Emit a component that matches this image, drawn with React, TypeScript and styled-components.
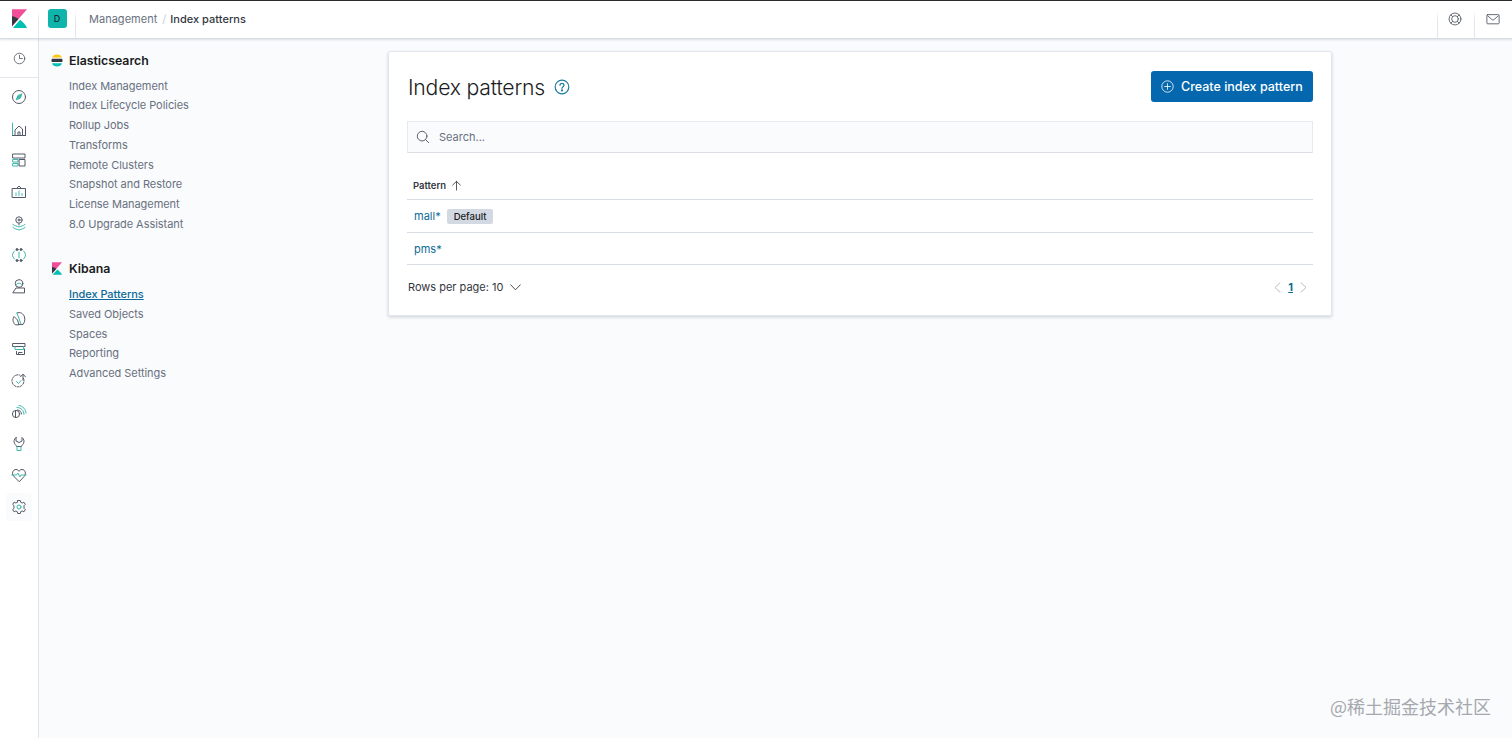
import React from "react";
import styled, { createGlobalStyle } from "styled-components";

const Global = createGlobalStyle`
  html, body { margin: 0; padding: 0; height: 100%; }
  body { font-family: Inter, "Liberation Sans", sans-serif; background: #f9fbfd; color: #343741; overflow: hidden; }
  #root { height: 738px; }
`;

const LINK = "#0e6a96";
const SEP = "linear-gradient(to bottom, transparent 28%, #e3e6ec 50%) 1";

const Page = styled.div`
  position: relative;
  width: 1512px;
  height: 738px;
  display: flex;
  flex-direction: column;
  overflow: hidden;
`;
const Header = styled.header`
  height: 39px;
  flex: none;
  box-sizing: border-box;
  border-top: 1px solid #2b2b2b;
  background: #fff;
  border-bottom: 1px solid #d8dde5;
  box-shadow: 0 1px 2px rgba(90, 100, 120, 0.18);
  display: flex;
  align-items: stretch;
  position: relative;
  z-index: 2;
`;
const LogoCell = styled.div`
  width: 39px;
  flex: none;
  display: flex;
  align-items: center;
  justify-content: center;
  padding-bottom: 3px;
  box-sizing: border-box;
  border-right: 1px solid;
  border-image: ${SEP};
`;
const SpaceCell = styled.div`
  width: 37px;
  flex: none;
  display: flex;
  align-items: center;
  justify-content: center;
  padding-bottom: 3px;
  box-sizing: border-box;
  border-right: 1px solid;
  border-image: ${SEP};
`;
const SpaceBadge = styled.div`
  width: 19px;
  height: 19px;
  border-radius: 3px;
  background: #0fb5ab;
  color: #1a2b30;
  font-size: 9px;
  font-weight: 500;
  display: flex;
  align-items: center;
  justify-content: center;
`;
const Crumbs = styled.nav`
  flex: 1;
  display: flex;
  align-items: center;
  padding: 0 0 1px 13px;
  font-size: 11px;
  letter-spacing: 0.02px;
`;
const CrumbLink = styled.span`
  color: #69707d;
`;
const CrumbSep = styled.span`
  color: #c6ccd6;
  margin: 0 4px 0 5px;
`;
const CrumbNow = styled.span`
  color: #343741;
  font-weight: 500;
`;
const HeadIcon = styled.div<{ $w: number }>`
  width: ${(p) => p.$w}px;
  flex: none;
  display: flex;
  align-items: center;
  justify-content: center;
  padding: 0 2px 1px 0;
  box-sizing: border-box;
  border-left: 1px solid;
  border-image: ${SEP};
`;
const Body = styled.div`
  flex: 1;
  display: flex;
  min-height: 0;
`;
const Rail = styled.aside`
  width: 39px;
  flex: none;
  box-sizing: border-box;
  background: #fff;
  border-right: 1px solid #dfe3ea;
  display: flex;
  flex-direction: column;
  align-items: stretch;
`;
const RailTop = styled.div`
  height: 38px;
  flex: none;
  display: flex;
  align-items: center;
  justify-content: center;
  border-bottom: 1px solid #e4e7ed;
`;
const RailList = styled.div`
  display: flex;
  flex-direction: column;
  padding-top: 3.5px;
`;
const RailItem = styled.div`
  height: 31.5px;
  display: flex;
  align-items: center;
  justify-content: center;
`;
const RailBubble = styled.span<{ $active?: boolean }>`
  width: 26px;
  height: 28px;
  border-radius: 4px;
  display: flex;
  align-items: center;
  justify-content: center;
  background: ${(p) => (p.$active ? "#fafbfc" : "transparent")};
`;
const SideNav = styled.nav`
  width: 349px;
  flex: none;
  box-sizing: border-box;
  padding: 11px 0 0 12px;
  display: flex;
  flex-direction: column;
`;
const Group = styled.div`
  margin-bottom: 24px;
`;
const GroupHead = styled.div`
  display: flex;
  align-items: center;
  gap: 6px;
  height: 20px;
  font-size: 12.3px;
  font-weight: 600;
  color: #1a1c21;
  margin-bottom: 6.5px;
`;
const GroupIcon = styled.span`
  width: 12px;
  height: 14px;
  display: flex;
  align-items: center;
  justify-content: center;
`;
const NavLink = styled.div<{ $active?: boolean }>`
  height: 19.75px;
  line-height: 19.75px;
  padding-left: 18px;
  font-size: 11px;
  letter-spacing: -0.05px;
  color: ${(p) => (p.$active ? LINK : "#69707d")};
  font-weight: ${(p) => (p.$active ? 500 : 400)};
  text-decoration: ${(p) => (p.$active ? "underline" : "none")};
`;
const Main = styled.main`
  padding-top: 12px;
  flex: none;
`;
const Card = styled.section`
  width: 944px;
  height: 265px;
  box-sizing: border-box;
  background: #fff;
  border: 1px solid #e3e6ec;
  border-radius: 2px;
  box-shadow: 0 1px 3px rgba(80, 95, 120, 0.2), 0 2px 4px rgba(80, 95, 120, 0.06);
  padding: 19px 18px 0 18px;
`;
const TitleRow = styled.div`
  display: flex;
  align-items: center;
  justify-content: space-between;
  height: 31px;
`;
const TitleWrap = styled.div`
  display: flex;
  align-items: center;
  gap: 9px;
  padding-left: 1px;
`;
const Title = styled.h1`
  margin: 0;
  font-size: 21.2px;
  font-weight: 300;
  letter-spacing: -0.2px;
  color: #1a1c21;
`;
const Primary = styled.button`
  width: 162px;
  height: 31px;
  border: none;
  border-radius: 3px;
  background: #0568ae;
  color: #fff;
  font-family: inherit;
  font-size: 12.5px;
  font-weight: 500;
  display: flex;
  align-items: center;
  gap: 7px;
  padding: 0 0 0 10px;
`;
const Search = styled.div`
  margin-top: 19px;
  height: 32px;
  box-sizing: border-box;
  background: #fafbfd;
  border: 1px solid #e6e9ef;
  border-bottom-color: #dcdfe6;
  display: flex;
  align-items: center;
  gap: 9px;
  padding: 0 0 0 8px;
  font-size: 11px;
  color: #69707d;
`;
const Table = styled.div`
  margin-top: 17px;
`;
const HeadRow = styled.div`
  height: 30px;
  box-sizing: border-box;
  padding: 2px 0 0 6px;
  display: flex;
  align-items: center;
  gap: 5px;
  font-size: 9.5px;
  font-weight: 600;
  color: #343741;
  border-bottom: 1px solid #d8dde5;
`;
const Row = styled.div`
  height: 32.5px;
  box-sizing: border-box;
  display: flex;
  align-items: center;
  gap: 6px;
  padding: 1px 0 0 7px;
  font-size: 11px;
  color: ${LINK};
  border-bottom: 1px solid #d8dde5;
`;
const Badge = styled.span`
  background: #d3d9e3;
  color: #1a1c21;
  font-size: 9.5px;
  font-weight: 500;
  height: 15px;
  line-height: 15px;
  border-radius: 2px;
  padding: 0 7px;
`;
const Pager = styled.div`
  margin-top: 13px;
  display: flex;
  align-items: center;
  justify-content: space-between;
  height: 18px;
  font-size: 11px;
  color: #343741;
  padding-left: 1px;
`;
const Rows = styled.div`
  display: flex;
  align-items: center;
  gap: 7px;
`;
const Pages = styled.div`
  display: flex;
  align-items: center;
  gap: 7px;
  padding-right: 6px;
`;
const PageNum = styled.span`
  color: ${LINK};
  font-weight: 700;
  font-size: 11px;
  text-decoration: underline;
`;
const Watermark = styled.div`
  position: absolute;
  right: 21px;
  bottom: 21px;
  font-family: "Noto Sans CJK SC", sans-serif;
  font-size: 18px;
  line-height: 22px;
  color: #a6a8ad;
`;

const C = "#535966";
const T = "#3fb8ad";

const Svg: React.FC<{ children: React.ReactNode; size?: number }> = ({ children, size = 16 }) => (
  <svg width={size} height={size} viewBox="0 0 16 16" fill="none" stroke={C} strokeWidth={1} strokeLinecap="round" strokeLinejoin="round">
    {children}
  </svg>
);

const KLogo: React.FC<{ w: number; h: number }> = ({ w, h }) => (
  <svg width={w} height={h} viewBox="0 0 16 20">
    <path d="M0 0H16L0 18.5Z" fill="#f04e98" />
    <path d="M0 7.5L0 18L7 10.5C5 8.8 2.5 7.7 0 7.5Z" fill="#343741" />
    <path d="M1 20L8.6 11.4C11.8 13.7 14.4 16.6 16 20Z" fill="#00bfb3" />
  </svg>
);

const railIcons: React.ReactNode[] = [
  <Svg key="discover"><circle cx="8" cy="8" r="6.5" /><path d="M10.8 5.2L9.2 9.2L5.2 10.8L6.8 6.8Z" stroke={T} fill={T} /></Svg>,
  <Svg key="visualize"><path d="M1.5 2V14.5" stroke={T} /><path d="M4 14.5V9L8 5L11.5 8V14.5M14.5 14.5V5.5M1.5 14.5H14.5" /><path d="M7 14.5V11H9V14.5" /></Svg>,
  <Svg key="dashboard"><rect x="2" y="2" width="12" height="4" /><rect x="2" y="7.5" width="5" height="2.5" stroke={T} /><rect x="2" y="11.5" width="5" height="2.5" stroke={T} /><rect x="8.5" y="7.5" width="5.5" height="6.5" /></Svg>,
  <Svg key="canvas"><rect x="1.5" y="4.5" width="13" height="9" /><path d="M5.5 4.5L8 2L10.5 4.5" /><path d="M5 11.5V9M8 11.5V7M11 11.5V9.5" stroke={T} /></Svg>,
  <Svg key="maps"><circle cx="8" cy="5" r="3.2" /><circle cx="8" cy="5" r="1" /><path d="M8 8.5V10" /><path d="M2 9.5C4 11 5.5 11 8 12C10.5 11 12 11 14 9.5M2 12.5C4 14 5.5 14 8 15C10.5 14 12 14 14 12.5" stroke={T} /></Svg>,
  <Svg key="ml"><circle cx="6" cy="2.5" r="1" fill={C} /><circle cx="10" cy="2.5" r="1" fill={C} /><circle cx="6" cy="13.5" r="1" fill={C} /><circle cx="10" cy="13.5" r="1" fill={C} /><path d="M3.5 4C2 5.5 1.5 7 1.5 8S2 10.5 3.5 12M12.5 4C14 5.5 14.5 7 14.5 8S14 10.5 12.5 12" stroke={T} /><path d="M8 5V11" stroke={T} /></Svg>,
  <Svg key="infra"><circle cx="8" cy="5.5" r="3.8" /><path d="M5 7C6 4.5 10 4.5 11 7" stroke={T} /><path d="M2 14.5L5 10H13.5V14.5Z" /></Svg>,
  <Svg key="logs"><path d="M4 14.5C1.5 12 1.5 8.5 3 6.5L6.5 10L8 14.5Z" /><path d="M6 3C9 1.5 12.5 3.5 13.5 7C14.3 10 13.5 12.5 12 14.5H8" /><path d="M6 3L10 14" stroke={T} /></Svg>,
  <Svg key="uptime"><path d="M2 2.5H14V5.5H2Z" /><path d="M4 5.5V8.5H12.5V5.5" stroke={T} /><path d="M13.5 8V13.5H5.5V10.5" /><path d="M7.5 13.5V11.5H11" /></Svg>,
  <Svg key="apm"><path d="M12.5 5.5A6 6 0 1 1 9 2.2" strokeDasharray="2.2 1.3" /><path d="M12 1.5V7M9.5 3.8L12 1.2L14.5 3.8" /><path d="M5.5 8.5L7.5 10.5L10 7.5" stroke={T} /></Svg>,
  <Svg key="siem"><circle cx="5" cy="10" r="3.6" /><path d="M4.5 7V13.5" /><path d="M6 3.5C10 3.5 13 6.5 13 10.5M8 1.5C12 2 15 5.5 15 9" stroke={T} /><path d="M6.5 6C8.8 6 10.5 8 10.5 10" /></Svg>,
  <Svg key="dev"><path d="M5 1.5V5L8 6.5L11 5V1.5C13 3 13.5 5.5 12.5 7.5C12 8.5 10.5 9.5 10.5 10.5H5.5C5.5 9.5 4 8.5 3.5 7.5C2.5 5.5 3 3 5 1.5Z" /><path d="M6 10.5V14.5H10V10.5" stroke={T} /></Svg>,
  <Svg key="monitoring"><path d="M8 14.5L2.5 9C0.5 6.5 1.8 2.5 5 2.5C6.5 2.5 7.5 3.3 8 4.3C8.5 3.3 9.5 2.5 11 2.5C14.2 2.5 15.5 6.5 13.5 9Z" /><path d="M0.8 8H5.5L7 6L8.8 10L10 8H15.2" stroke={T} /></Svg>,
  <Svg key="gear"><path d="M6.7 1.5H9.3L9.7 3.3L11.2 4L12.9 3.2L14.3 5.4L13 6.7V9.3L14.3 10.6L12.9 12.8L11.2 12L9.7 12.7L9.3 14.5H6.7L6.3 12.7L4.8 12L3.1 12.8L1.7 10.6L3 9.3V6.7L1.7 5.4L3.1 3.2L4.8 4L6.3 3.3Z" /><circle cx="8" cy="8" r="2" stroke={T} /></Svg>,
];

const esLinks = ["Index Management", "Index Lifecycle Policies", "Rollup Jobs", "Transforms", "Remote Clusters", "Snapshot and Restore", "License Management", "8.0 Upgrade Assistant"];
const kbLinks = ["Index Patterns", "Saved Objects", "Spaces", "Reporting", "Advanced Settings"];

export default function App() {
  return (
    <Page>
      <Global />
      <Header>
        <LogoCell><KLogo w={15} h={19} /></LogoCell>
        <SpaceCell><SpaceBadge>D</SpaceBadge></SpaceCell>
        <Crumbs>
          <CrumbLink>Management</CrumbLink>
          <CrumbSep>/</CrumbSep>
          <CrumbNow>Index patterns</CrumbNow>
        </Crumbs>
        <HeadIcon $w={37}>
          <Svg size={14}>
            <circle cx="8" cy="8" r="6.8" />
            <circle cx="8" cy="8" r="3.8" />
            <path d="M3.2 3.2L5.3 5.3M12.8 3.2L10.7 5.3M3.2 12.8L5.3 10.7M12.8 12.8L10.7 10.7" />
          </Svg>
        </HeadIcon>
        <HeadIcon $w={38}>
          <Svg size={14}>
            <rect x="1" y="3" width="14" height="10.5" rx="1" />
            <path d="M2 4.5L8 9.5L14 4.5" />
          </Svg>
        </HeadIcon>
      </Header>
      <Body>
        <Rail>
          <RailTop>
            <Svg size={13}><circle cx="8" cy="8" r="6.5" /><path d="M8 4V8H11.5" /></Svg>
          </RailTop>
          <RailList>
            {railIcons.map((icon, i) => (
              <RailItem key={i}>
                <RailBubble $active={i === railIcons.length - 1}>{icon}</RailBubble>
              </RailItem>
            ))}
          </RailList>
        </Rail>
        <SideNav>
          <Group>
            <GroupHead>
              <GroupIcon>
                <svg width="12" height="13" viewBox="0 0 12 13">
                  <path d="M1 3.6C1.8 1.6 3.7 0.5 6 0.5S10.2 1.6 11 3.6Z" fill="#fec514" />
                  <rect x="0.5" y="4.8" width="11" height="3.3" rx="1.2" fill="#343741" />
                  <path d="M1 9.3C1.8 11.4 3.7 12.5 6 12.5S10.2 11.4 11 9.3Z" fill="#00bfb3" />
                </svg>
              </GroupIcon>
              Elasticsearch
            </GroupHead>
            {esLinks.map((l) => <NavLink key={l}>{l}</NavLink>)}
          </Group>
          <Group>
            <GroupHead>
              <GroupIcon><KLogo w={10} h={13} /></GroupIcon>
              Kibana
            </GroupHead>
            {kbLinks.map((l, i) => <NavLink key={l} $active={i === 0}>{l}</NavLink>)}
          </Group>
        </SideNav>
        <Main>
          <Card>
            <TitleRow>
              <TitleWrap>
                <Title>Index patterns</Title>
                <svg width="16" height="16" viewBox="0 0 16 16" fill="none" stroke="#1f7a9e" strokeWidth="1.2" strokeLinecap="round">
                  <circle cx="8" cy="8" r="6.8" />
                  <path d="M6 6.3C6 5 7 4.3 8 4.3S10 5 10 6.2C10 7.7 8 7.7 8 9.3" />
                  <circle cx="8" cy="11.4" r="0.5" fill="#1f7a9e" />
                </svg>
              </TitleWrap>
              <Primary>
                <svg width="13" height="13" viewBox="0 0 16 16" fill="none" stroke="#fff" strokeWidth="1">
                  <circle cx="8" cy="8" r="7" />
                  <path d="M8 4V12M4 8H12" />
                </svg>
                Create index pattern
              </Primary>
            </TitleRow>
            <Search>
              <svg width="14" height="14" viewBox="0 0 16 16" fill="none" stroke="#535966" strokeWidth="1.1" strokeLinecap="round">
                <circle cx="7" cy="7" r="5.5" />
                <path d="M11 11L14.5 14.5" />
              </svg>
              Search...
            </Search>
            <Table>
              <HeadRow>
                Pattern
                <svg width="11" height="11" viewBox="0 0 12 12" fill="none" stroke="#343741" strokeWidth="0.9" strokeLinecap="round" strokeLinejoin="round">
                  <path d="M6 1.5V11M1.8 5.5L6 1.5L10.2 5.5" />
                </svg>
              </HeadRow>
              <Row>mall*<Badge>Default</Badge></Row>
              <Row>pms*</Row>
            </Table>
            <Pager>
              <Rows>
                Rows per page: 10
                <svg width="11" height="7" viewBox="0 0 11 7" fill="none" stroke="#343741" strokeWidth="0.9" strokeLinecap="round" strokeLinejoin="round">
                  <path d="M0.7 0.8L5.5 5.8L10.3 0.8" />
                </svg>
              </Rows>
              <Pages>
                <svg width="7" height="11" viewBox="0 0 7 11" fill="none" stroke="#b5bac4" strokeLinecap="round" strokeLinejoin="round">
                  <path d="M6 0.8L1 5.5L6 10.2" />
                </svg>
                <PageNum>1</PageNum>
                <svg width="7" height="11" viewBox="0 0 7 11" fill="none" stroke="#b5bac4" strokeLinecap="round" strokeLinejoin="round">
                  <path d="M1 0.8L6 5.5L1 10.2" />
                </svg>
              </Pages>
            </Pager>
          </Card>
        </Main>
      </Body>
      <Watermark>@稀土掘金技术社区</Watermark>
    </Page>
  );
}
